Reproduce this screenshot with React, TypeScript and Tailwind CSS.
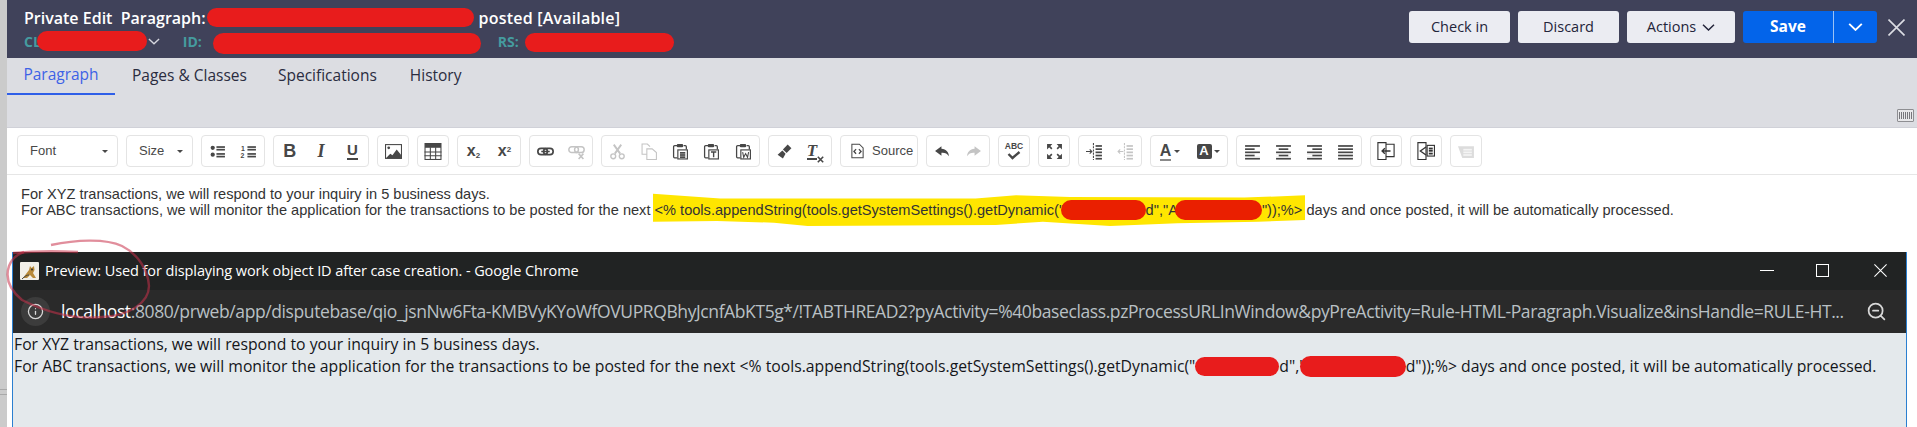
import type { ReactNode } from "react";
import { Info, ZoomOut } from "lucide-react";

/* ---------------------------------------------------------------- helpers */

const UI = "font-['Open_Sans',sans-serif]";
const ARIAL = "font-['Liberation_Sans',Arial,sans-serif]";
const ON = "#474747";
const OFF = "#c4c4c4";

function Blob({ className }: { className: string }) {
  return <span className={`inline-block flex-none rounded-full align-middle ${className}`} />;
}

function Chev({ w, className, sw = 1.5 }: { w: number; className?: string; sw?: number }) {
  return (
    <svg width={w} height={Math.round(w * 0.55)} viewBox="0 0 13 7" fill="none" className={className}>
      <path d="M1 .8 6.500 6 12 .8" stroke="currentColor" strokeWidth={sw} />
    </svg>
  );
}

function Cross({ size, sw, className }: { size: number; sw: number; className?: string }) {
  return (
    <svg width={size} height={size} viewBox="0 0 16 16" fill="none" className={className}>
      <path d="M.5.5l15 15M15.500.5l-15 15" stroke="currentColor" strokeWidth={sw} />
    </svg>
  );
}

function Ico({ children, w = 17, h = 17 }: { children: ReactNode; w?: number; h?: number }) {
  return (
    <svg width={w} height={h} viewBox="0 0 16 16" fill="none">
      {children}
    </svg>
  );
}

function Cell({ children }: { children?: ReactNode }) {
  return <div className="flex h-full flex-1 items-center justify-center">{children}</div>;
}

function Group({ className, children }: { className: string; children: ReactNode }) {
  return (
    <div className={`flex h-[32px] flex-none items-center rounded-[4px] border border-[#e4e4e4] bg-white ${className}`}>
      {children}
    </div>
  );
}

function Combo({ label, className, pad }: { label: string; className: string; pad: string }) {
  return (
    <Group className={`${className} justify-between ${pad} pr-[9px]`}>
      <span className={`${ARIAL} text-[13px] text-[#484848]`}>{label}</span>
      <span className="h-0 w-0 border-x-[3px] border-t-[3px] border-x-transparent border-t-[#484848]" />
    </Group>
  );
}

/* ------------------------------------------------------------ toolbar icons */

const Lines = ({ x, ys, w, c = ON }: { x: number; ys: number[]; w: number; c?: string }) => (
  <>
    {ys.map((y) => (
      <rect key={y} x={x} y={y} width={w} height="1.6" fill={c} />
    ))}
  </>
);

const Clip = ({ children, c = ON }: { children?: ReactNode; c?: string }) => (
  <Ico>
    <path d="M5 2.500H2.500a1 1 0 0 0-1 1V13a1 1 0 0 0 1 1H5" stroke={c} strokeWidth="1.2" />
    <path d="M11 2.500h1.500a1 1 0 0 1 1 1V6" stroke={c} strokeWidth="1.2" />
    <rect x="4.500" y="1" width="6" height="3" rx="1" fill={c} />
    <rect x="5.500" y="6.500" width="9" height="8.500" fill="#fff" stroke={c} strokeWidth="1.1" />
    {children}
  </Ico>
);

function BoldText({ children, className }: { children: ReactNode; className: string }) {
  return <span className={`${ARIAL} leading-none text-[#474747] ${className}`}>{children}</span>;
}

const Undo = ({ c, flip }: { c: string; flip?: boolean }) => (
  <Ico>
    <path
      d="M7 3 1 7.500 7 12V9.200c3-.3 5.500.6 7 3.300 0-4-2.500-6.800-7-7.200Z"
      fill={c}
      transform={flip ? "matrix(-1 0 0 1 16 0)" : undefined}
    />
  </Ico>
);

/* ------------------------------------------------------------------ toolbar */

function Toolbar() {
  return (
    <div className="flex h-[47px] items-start gap-2 border-b border-[#e6e6e6] pl-[10px] pt-[7px]">
      <Combo label="Font" className="w-[101px]" pad="pl-[12px]" />
      <Combo label="Size" className="w-[67px]" pad="pl-[12px]" />
      <Group className="w-[64px]">
        <Cell>
          <Ico>
            <circle cx="3.500" cy="4.500" r="2" fill={ON} />
            <circle cx="3.500" cy="11" r="2" fill={ON} />
            <Lines x={7} ys={[3, 5.500, 9.500, 12]} w={8} />
          </Ico>
        </Cell>
        <Cell>
          <Ico>
            <text x="1" y="7.500" fontSize="6.500" fontWeight="700" fill={ON} fontFamily="Liberation Sans">1</text>
            <text x="0.500" y="14.500" fontSize="6.500" fontWeight="700" fill={ON} fontFamily="Liberation Sans">2</text>
            <Lines x={7} ys={[3, 5.500, 9.500, 12]} w={8} />
          </Ico>
        </Cell>
      </Group>
      <Group className="w-[96px]">
        <Cell><BoldText className="text-[18px] font-bold">B</BoldText></Cell>
        <Cell><span className="font-['Liberation_Serif',serif] text-[18px] font-bold italic leading-none text-[#474747]">I</span></Cell>
        <Cell><BoldText className="border-b-2 border-[#474747] pb-px text-[15px] font-bold">U</BoldText></Cell>
      </Group>
      <Group className="w-[32px]">
        <Cell>
          <Ico>
            <rect x="0.500" y="1.500" width="15" height="13" fill="#fff" stroke={ON} />
            <circle cx="3.500" cy="4.500" r="1.300" fill={ON} />
            <path d="M1 14l4-4 2 1.500L11 6l4 5v3.500Z" fill={ON} />
          </Ico>
        </Cell>
      </Group>
      <Group className="w-[32px]">
        <Cell>
          <Ico w={18} h={17}>
            <rect x="0.500" y="0.500" width="15" height="15" stroke={ON} />
            <rect x="0.500" y="0.500" width="15" height="4" fill={ON} />
            <path d="M0 8.500h16M0 12h16M5.500 4v12M10.500 4v12" stroke={ON} />
          </Ico>
        </Cell>
      </Group>
      <Group className="w-[64px]">
        <Cell>
          <BoldText className="text-[16px] font-bold">x<sub className="text-[8px]">2</sub></BoldText>
        </Cell>
        <Cell>
          <BoldText className="text-[16px] font-bold">x<sup className="text-[8px]">2</sup></BoldText>
        </Cell>
      </Group>
      <Group className="w-[64px]">
        <Cell>
          <Ico>
            <rect x="0.800" y="5" width="9" height="6" rx="3" stroke={ON} strokeWidth="1.600" />
            <rect x="6.200" y="5" width="9" height="6" rx="3" stroke={ON} strokeWidth="1.600" />
            <rect x="4" y="7.300" width="8" height="1.400" fill={ON} />
          </Ico>
        </Cell>
        <Cell>
          <Ico>
            <rect x="0.800" y="3.500" width="9" height="5.500" rx="2.700" stroke={OFF} strokeWidth="1.400" />
            <rect x="6.200" y="3.500" width="9" height="5.500" rx="2.700" stroke={OFF} strokeWidth="1.400" />
            <path d="m10 10 4.500 5M14.500 10 10 15" stroke={OFF} strokeWidth="1.500" />
          </Ico>
        </Cell>
      </Group>
      <Group className="w-[159px]">
        <Cell>
          <Ico>
            <path d="M4.500 1.500 10.500 10M11.500 1.500 5.500 10" stroke={OFF} strokeWidth="1.800" />
            <circle cx="4" cy="12.500" r="2.300" stroke={OFF} strokeWidth="1.300" />
            <circle cx="12" cy="12.500" r="2.300" stroke={OFF} strokeWidth="1.300" />
          </Ico>
        </Cell>
        <Cell>
          <Ico>
            <path d="M6 10.500H1V1h5l2.500 2.500" stroke={OFF} />
            <path d="M5.500 5.500h5l4 3.500v6.500h-9Z" fill="#fff" stroke={OFF} />
          </Ico>
        </Cell>
        <Cell>
          <Clip>
            <Lines x={7.500} ys={[8.500, 10.500, 12.500]} w={5} />
          </Clip>
        </Cell>
        <Cell>
          <Clip>
            <path d="M7.500 8.500h5M10 8.500v5" stroke={ON} strokeWidth="1.300" />
          </Clip>
        </Cell>
        <Cell>
          <Clip>
            <path d="m7.200 8.500 1 5 1.800-3.500 1.800 3.500 1-5" stroke={ON} strokeWidth="1" />
          </Clip>
        </Cell>
      </Group>
      <Group className="w-[64px]">
        <Cell>
          <Ico>
            <path d="M11 1.500 14.500 5 10 9.500 6.500 6Z" fill={ON} />
            <path d="M6 7l3 3-2.500 4.500L1.500 11Z" fill={ON} />
          </Ico>
        </Cell>
        <Cell>
          <div className="flex items-end">
            <span className="border-b-2 border-[#474747] font-['Liberation_Serif',serif] text-[17px] font-bold italic leading-[15px] text-[#474747]">T</span>
            <svg width="7" height="7" viewBox="0 0 7 7" className="mb-[-3px]">
              <path d="m.8.8 5.400 5.400M6.200.8.8 6.200" stroke={ON} strokeWidth="1.600" />
            </svg>
          </div>
        </Cell>
      </Group>
      <Group className="w-[78px] gap-[7px] pl-[9px]">
        <Ico w={15} h={18}>
          <path d="M2 .8h8l4 4v10.400H2Z" stroke={ON} strokeWidth="1.100" />
          <path d="M6.500 6 4.200 8.500l2.300 2.500M9.500 6l2.300 2.500L9.500 11" stroke={ON} strokeWidth="1.400" />
        </Ico>
        <span className={`${ARIAL} text-[13px] text-[#484848]`}>Source</span>
      </Group>
      <Group className="w-[64px]">
        <Cell><Undo c={ON} /></Cell>
        <Cell><Undo c={OFF} flip /></Cell>
      </Group>
      <Group className="w-[32px]">
        <Cell>
          <div className="flex flex-col items-center">
            <span className={`${ARIAL} text-[8.500px] font-bold leading-[9px] text-[#474747]`}>ABC</span>
            <svg width="16" height="9" viewBox="0 0 16 9">
              <path d="m2.500 3 4 4 7-6" stroke={ON} strokeWidth="2.400" fill="none" />
            </svg>
          </div>
        </Cell>
      </Group>
      <Group className="w-[32px]">
        <Cell>
          <Ico>
            <path d="M1 1h5L1 6ZM15 1v5l-5-5ZM1 15v-5l5 5ZM15 15h-5l5-5Z" fill={ON} />
            <path d="m2.500 2.500 3 3M13.500 2.500l-3 3M2.500 13.500l3-3M13.500 13.500l-3-3" stroke={ON} strokeWidth="1.500" />
          </Ico>
        </Cell>
      </Group>
      <Group className="w-[64px]">
        <Cell>
          <Ico>
            <path d="M7 0v16" stroke={ON} strokeDasharray="2 1" />
            <path d="M0 8h5M3.500 6l2 2-2 2" stroke={ON} />
            <Lines x={9} ys={[2, 5, 8, 11, 14]} w={6} />
          </Ico>
        </Cell>
        <Cell>
          <Ico>
            <path d="M7 0v16" stroke={OFF} strokeDasharray="2 1" />
            <path d="M6 8H1M3 6 1 8l2 2" stroke={OFF} />
            <Lines x={9} ys={[2, 5, 8, 11, 14]} w={6} c={OFF} />
          </Ico>
        </Cell>
      </Group>
      <Group className="w-[78px]">
        <Cell>
          <div className="flex items-center gap-[3px]">
            <span className={`${ARIAL} border-b-2 border-[#8a8a8a] text-[16px] font-bold leading-[17px] text-[#474747]`}>A</span>
            <span className="h-0 w-0 border-x-[3px] border-t-[3px] border-x-transparent border-t-[#484848]" />
          </div>
        </Cell>
        <Cell>
          <div className="flex items-center gap-[2px]">
            <span className={`${ARIAL} flex h-[15px] w-[15px] items-center justify-center rounded-[2px] bg-[#474747] text-[13px] font-bold text-white`}>A</span>
            <span className="h-0 w-0 border-x-[3px] border-t-[3px] border-x-transparent border-t-[#484848]" />
          </div>
        </Cell>
      </Group>
      <Group className="w-[126px]">
        <Cell><Ico><Lines x={1} ys={[2, 5, 8, 11, 14]} w={14} /><rect x="10" y="4" width="6" height="3" fill="#fff" /><rect x="10" y="10" width="6" height="3" fill="#fff" /></Ico></Cell>
        <Cell><Ico><Lines x={1} ys={[2, 5, 8, 11, 14]} w={14} /><rect x="0" y="4.600" width="3.500" height="2.400" fill="#fff" /><rect x="12.500" y="4.600" width="3.500" height="2.400" fill="#fff" /><rect x="0" y="10.600" width="3.500" height="2.400" fill="#fff" /><rect x="12.500" y="10.600" width="3.500" height="2.400" fill="#fff" /></Ico></Cell>
        <Cell><Ico><Lines x={1} ys={[2, 5, 8, 11, 14]} w={14} /><rect x="0" y="4.600" width="6" height="2.400" fill="#fff" /><rect x="0" y="10.600" width="6" height="2.400" fill="#fff" /></Ico></Cell>
        <Cell><Ico><Lines x={1} ys={[2, 5, 8, 11, 14]} w={14} /></Ico></Cell>
      </Group>
      <Group className="w-[32px]">
        <Cell>
          <Ico w={18} h={18}>
            <path d="M8 .5H.8v15H8ZM8 2h7.200v11H8" stroke="#333" />
            <path d="M12 8H4.500M7 5.500 4.500 8 7 10.500" stroke="#333" strokeWidth="1.200" />
          </Ico>
        </Cell>
      </Group>
      <Group className="w-[32px]">
        <Cell>
          <Ico w={18} h={18}>
            <path d="M8 .5H.8v15H8Z" stroke="#333" />
            <path d="M8 4.500 3 8l5 3.500" stroke="#333" strokeWidth="1.200" />
            <rect x="9" y="3" width="6.500" height="9.500" stroke="#333" />
            <Lines x={10.500} ys={[5, 7, 9.500]} w={3.500} c="#333" />
          </Ico>
        </Cell>
      </Group>
      <Group className="w-[32px]">
        <Cell>
          <Ico>
            <path d="M0 3h15v11H4Z" fill="#dcdcdc" />
            <Lines x={5} ys={[5.500, 8, 10.500]} w={8} c="#f4f4f4" />
          </Ico>
        </Cell>
      </Group>
    </div>
  );
}

/* ------------------------------------------------------------------- header */

function Header() {
  return (
    <div className={`flex h-[58px] items-start justify-between bg-[#40425a] pl-[17px] pr-[12px] ${UI}`}>
      <div className="flex flex-col pt-[5px]">
        <div className="flex h-[25px] items-center whitespace-pre text-[16px] font-semibold text-white">
          <span>Private Edit  Paragraph:</span>
          <Blob className="ml-[1px] h-[19px] w-[267px] bg-[#e81c1c]" />
          <span className="ml-[5px] tracking-[0.2px]">posted [Available]</span>
        </div>
        <div className="mt-px flex h-[20px] items-center text-[14px] font-bold text-[#459b9f]">
          <span>CL</span>
          <Blob className="ml-[-4px] h-[20px] w-[110px] bg-[#e81c1c]" />
          <Chev w={12} className="ml-[1px] text-[#d5d6de]" />
          <span className="ml-[23px]">ID:</span>
          <Blob className="ml-[11px] mt-[4px] h-[21px] w-[268px] bg-[#e81c1c]" />
          <span className="ml-[17px]">RS:</span>
          <Blob className="ml-[6px] mt-[2px] h-[19px] w-[149px] bg-[#e81c1c]" />
        </div>
      </div>
      <div className="flex items-center pt-[11px]">
        <button className="h-[32px] w-[101px] rounded-[3px] bg-[#ebecf2] text-[14.500px] text-[#23243a]">Check in</button>
        <button className="ml-2 h-[32px] w-[101px] rounded-[3px] bg-[#ebecf2] text-[14.500px] text-[#23243a]">Discard</button>
        <button className="ml-2 flex h-[32px] w-[108px] items-center justify-center gap-[6px] rounded-[3px] bg-[#ebecf2] text-[14.500px] text-[#23243a]">
          Actions
          <Chev w={13} />
        </button>
        <div className="ml-2 flex h-[32px] w-[134px] items-center rounded-[3px] bg-[#0364ea] text-white">
          <span className="flex h-full w-[91px] items-center justify-center border-r border-[#9cc2f5] text-[15.500px] font-bold">Save</span>
          <span className="flex flex-1 items-center justify-center">
            <Chev w={15} sw={1.7} />
          </span>
        </div>
        <Cross size={17} sw={1.5} className="ml-[11px] text-[#dcdde4]" />
      </div>
    </div>
  );
}

function Tabs() {
  return (
    <div className={`relative h-[70px] border-b border-[#d0d1d8] bg-[#dcdde2] ${UI}`}>
      <div className="flex h-[37px] items-stretch text-[15.500px] text-[#2a2c40]">
        <div className="flex w-[108px] items-center justify-center border-b-[2px] border-[#2f5fe8] pb-px text-[#3d62e6]">Paragraph</div>
        <div className="ml-[17px] flex items-center pb-[2px]">Pages &amp; Classes</div>
        <div className="ml-[31px] flex items-center pb-[2px]">Specifications</div>
        <div className="ml-[33px] flex items-center pb-[2px]">History</div>
      </div>
      <div className="absolute bottom-[5px] right-[3px] flex h-[13px] w-[17px] items-center justify-center rounded-[1px] border border-[#8e8e92] bg-[#e8e8ea]">
        <span className="h-[7px] w-[13px] bg-[repeating-linear-gradient(90deg,#77777c_0_1px,transparent_1px_2px)]" />
      </div>
    </div>
  );
}

/* ------------------------------------------------------------ preview window */

function PreviewWindow() {
  return (
    <div className={`ml-[5px] mr-[10px] mt-[34px] flex min-h-0 flex-1 flex-col border-x border-[#2a7fd0] ${UI}`}>
      <div className="flex h-[38px] flex-none items-center bg-[#212323] pl-[7px] text-white">
        <div className="flex h-[18px] w-[19px] items-end justify-center rounded-[1px] bg-[#f2efe8]">
          <svg width="17" height="16" viewBox="0 0 17 16">
            <path d="M2 14 8 6l1-4 1.500 2L13 2l.500 4-1.500 3 3 5h-3L9 11l-3 3Z" fill="#b98a3a" />
            <path d="M1 15c3-3 5-4 7-4" stroke="#444" fill="none" />
            <circle cx="11" cy="5.500" r="1" fill="#333" />
          </svg>
        </div>
        <span className="ml-[6px] text-[14.500px] tracking-[-0.1px]">
          Preview: Used for displaying work object ID after case creation. - Google Chrome
        </span>
        <div className="ml-auto flex items-center pb-[1px] pr-[19px]">
          <span className="h-px w-[14px] bg-white" />
          <span className="ml-[42px] h-[13px] w-[13px] border border-white" />
          <Cross size={13} sw={1.3} className="ml-[45px]" />
        </div>
      </div>
      <div className="flex h-[43px] flex-none items-center bg-[#2a2a2a] pl-[8px] pr-[19px]">
        <span className="flex h-[29px] w-[29px] flex-none items-center justify-center rounded-full bg-[#3c3c3c]">
          <Info className="h-[17px] w-[17px] text-[#d8d8d8]" strokeWidth={1.800} />
        </span>
        <span className="ml-[11px] min-w-0 flex-1 whitespace-nowrap text-[17.500px] tracking-[-0.4px] text-[#b9c0c4]">
          <span className="text-white">localhost</span>
          :8080/prweb/app/disputebase/qio_jsnNw6Fta-KMBVyKYoWfOVUPRQBhyJcnfAbKT5g*/!TABTHREAD2?pyActivity=%40baseclass.pzProcessURLInWindow&amp;pyPreActivity=Rule-HTML-Paragraph.Visualize&amp;insHandle=RULE-HT...
        </span>
        <ZoomOut className="ml-[12px] h-[21px] w-[21px] flex-none text-[#d8d8d8]" strokeWidth={2} />
      </div>
      <div className="flex-1 bg-[#e4e9ec] pl-[1px] text-[15.750px] leading-[22px] text-[#14161a]">
        <div>For XYZ transactions, we will respond to your inquiry in 5 business days.</div>
        <div className="flex items-center whitespace-pre">
          <span>For ABC transactions, we will monitor the application for the transactions to be posted for the next &lt;% tools.appendString(tools.getSystemSettings().getDynamic("</span>
          <Blob className="h-[19px] w-[84px] bg-[#e81c1c]" />
          <span>d","</span>
          <Blob className="ml-[-6px] h-[21px] w-[106px] bg-[#e81c1c]" />
          <span>d"));%&gt; days and once posted, it will be automatically processed.</span>
        </div>
      </div>
    </div>
  );
}

/* ---------------------------------------------------------------------- app */

export default function App() {
  return (
    <div className="relative flex h-[427px] w-[1917px] overflow-hidden bg-white">
      <div className="relative w-[7px] flex-none bg-[#cbcbcb]">
        <div className="absolute left-0 top-[389px] h-[6px] w-[7px] border-y border-[#a9a9a9]" />
      </div>
      <div className="flex min-w-0 flex-1 flex-col">
        <Header />
        <Tabs />
        <Toolbar />
        <div className={`${ARIAL} isolate whitespace-pre pl-[14px] pt-[11px] text-[14.600px] leading-[16px] text-[#333]`}>
          <div>For XYZ transactions, we will respond to your inquiry in 5 business days.</div>
          <div className="flex h-[16px] items-center">
            <span>For ABC transactions, we will monitor the application for the transactions to be posted for the next </span>
            <span className="relative flex items-center">
              {/* marker highlight, drawn by hand in the picture */}
              <svg
                className="absolute left-[-2px] top-[-7px] -z-10 h-[33px] w-[652px]"
                viewBox="0 0 970 100"
                preserveAspectRatio="none"
              >
                <path
                  d="M0 2 100 17H480L540 7 620 12 880 14 970 7V82L900 87 780 92 680 100 580 87 510 97 230 100 180 90 95 85 0 87Z"
                  fill="#ffe600"
                />
              </svg>
              <span>&lt;% tools.appendString(tools.getSystemSettings().getDynamic("R</span>
              <Blob className="ml-[-14px] h-[20px] w-[85px] bg-[#ea1f00]" />
              <span>d","A</span>
              <Blob className="ml-[-3px] h-[20px] w-[87px] bg-[#ea1f00]" />
              <span>"));%&gt; </span>
            </span>
            <span>days and once posted, it will be automatically processed.</span>
          </div>
        </div>
        <PreviewWindow />
      </div>

      {/* hand-drawn circle around the window icon */}
      <svg className="pointer-events-none absolute left-0 top-0" width="200" height="330" viewBox="0 0 200 330" fill="none">
        <path
          d="M51 245C75 240 105 238 122 246 138 254 148 270 149 286 149 302 130 316 102 317 70 320 42 310 22 300 10 290 5 278 9 266 12 258 18 254 24 252"
          stroke="#c8324a"
          strokeOpacity="0.55"
          strokeWidth="2.400"
        />
        <path d="M13 253C35 251 58 251 78 252" stroke="#c8324a" strokeOpacity="0.55" strokeWidth="2.400" />
      </svg>
    </div>
  );
}
